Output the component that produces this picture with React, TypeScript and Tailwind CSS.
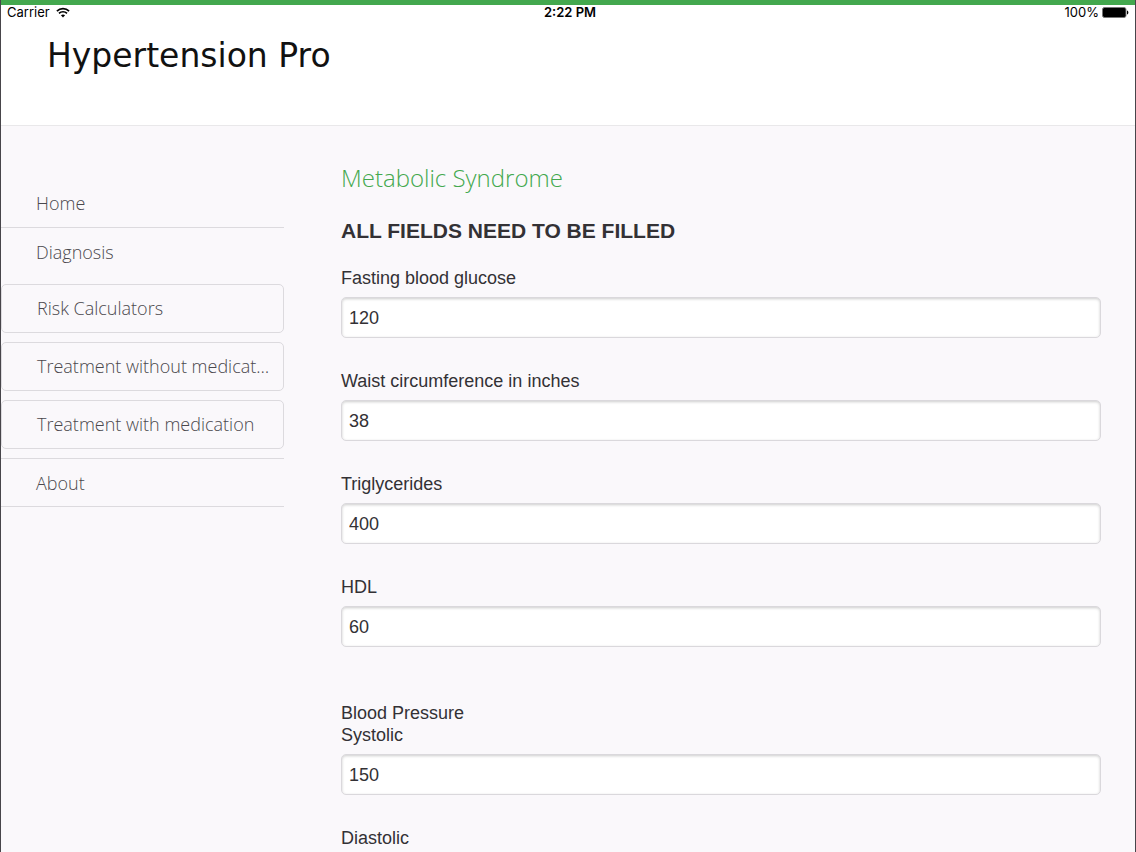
import React, { useState } from 'react';

const INITIAL_VALUES: Record<string, string> = {
  glucose: '120',
  waist: '38',
  triglycerides: '400',
  hdl: '60',
  systolic: '150',
  diastolic: '',
};

const WifiIcon: React.FC = () => (
  <svg width="14" height="11" viewBox="0 0 14 11" fill="none" stroke="#000" aria-hidden="true">
    <path d="M0.9 4.1C4.3 0.7 9.7 0.7 13.1 4.1" strokeWidth="1.7" />
    <path d="M3 6.4C5.2 4.2 8.8 4.2 11 6.4" strokeWidth="1.7" />
    <path d="M7 10.6L4.9 8.3C6.1 7.2 7.9 7.2 9.1 8.3Z" fill="#000" stroke="none" />
  </svg>
);

const BatteryIcon: React.FC = () => (
  <svg width="27" height="11" viewBox="0 0 27 11" aria-hidden="true">
    <rect x="0.5" y="0.5" width="23.5" height="10" rx="2" fill="#000" stroke="#777" />
    <path d="M25 3.5C26.8 4 26.8 7 25 7.5Z" fill="#000" />
  </svg>
);

const StatusBar: React.FC = () => (
  <div className="grid grid-cols-3 items-center pl-[6px] pr-[6px] h-[14px] font-['Inter',sans-serif] text-[13px] leading-[14px] text-black">
    <div className="flex items-center gap-[6px]">
      <span>Carrier</span>
      <WifiIcon />
    </div>
    <div className="pl-1 text-center font-semibold">2:22 PM</div>
    <div className="flex items-center justify-end gap-[3px]">
      <span>100%</span>
      <BatteryIcon />
    </div>
  </div>
);

interface NavLinkProps {
  label: string;
  className?: string;
}

const NavLink: React.FC<NavLinkProps> = ({ label, className = '' }) => (
  <a href="#" className={`block h-[49px] pl-[35px] leading-[48px] border-[#dcdade] ${className}`}>
    {label}
  </a>
);

const NavBox: React.FC<{ label: string }> = ({ label }) => (
  <button
    type="button"
    className="block w-full h-[49px] pl-[35px] pr-[12px] text-left truncate border border-[#dcdade] rounded-[5px]"
  >
    {label}
  </button>
);

const Sidebar: React.FC = () => (
  <nav className="w-[283px] shrink-0 pt-[53px] font-['Open_Sans',sans-serif] font-light text-[18px] text-[#4a484d]">
    <NavLink label="Home" className="border-b" />
    <NavLink label="Diagnosis" />
    <div className="flex flex-col gap-[9px] mt-[7px]">
      <NavBox label="Risk Calculators" />
      <NavBox label="Treatment without medication" />
      <NavBox label="Treatment with medication" />
      <NavLink label="About" className="border-y" />
    </div>
  </nav>
);

interface FieldProps {
  id: string;
  label: string;
  value: string;
  onChange: (id: string, value: string) => void;
}

const Field: React.FC<FieldProps> = ({ id, label, value, onChange }) => (
  <div className="mb-8">
    <label htmlFor={id} className="block mb-2 leading-[22px]">
      {label}
    </label>
    <input
      id={id}
      type="text"
      inputMode="numeric"
      value={value}
      onChange={(e) => onChange(id, e.target.value)}
      className="block w-full h-[41px] px-[7px] pt-[2px] bg-white border border-[#dad8dc] rounded-[5px] shadow-[inset_0_1px_3px_rgba(0,0,0,0.2)] outline-none"
    />
  </div>
);

const App: React.FC = () => {
  const [values, setValues] = useState(INITIAL_VALUES);

  const update = (id: string, value: string) => {
    setValues((prev) => ({ ...prev, [id]: value }));
  };

  return (
    <div className="h-screen flex flex-col bg-[#faf8fb] border-x border-[#47454a]">
      <header className="shrink-0 h-[126px] bg-white border-t-[5px] border-t-[#43a84e] border-b border-b-[#e9e8ea]">
        <StatusBar />
        <h1 className="pl-[46px] pt-[17px] font-['DejaVu_Sans',sans-serif] text-[33px] leading-[40px] text-[#111]">
          Hypertension Pro
        </h1>
      </header>

      <div className="flex-1 min-h-0 flex overflow-y-auto [scrollbar-width:none]">
        <Sidebar />

        <main className="flex-1 min-w-0 pl-[57px] pr-[34px] pt-[34px] font-['Liberation_Sans',sans-serif] text-[18px] text-[#333135]">
          <h2 className="font-['Open_Sans',sans-serif] font-light text-[24px] leading-[36px] text-[#43a84e]">
            Metabolic Syndrome
          </h2>
          <h3 className="mt-[21px] mb-[22px] font-bold text-[21px] leading-[28px]">ALL FIELDS NEED TO BE FILLED</h3>

          <form>
            <Field id="glucose" label="Fasting blood glucose" value={values.glucose} onChange={update} />
            <Field id="waist" label="Waist circumference in inches" value={values.waist} onChange={update} />
            <Field id="triglycerides" label="Triglycerides" value={values.triglycerides} onChange={update} />
            <Field id="hdl" label="HDL" value={values.hdl} onChange={update} />

            <fieldset>
              <legend className="pt-[23px] leading-[22px]">Blood Pressure</legend>
              <Field id="systolic" label="Systolic" value={values.systolic} onChange={update} />
              <Field id="diastolic" label="Diastolic" value={values.diastolic} onChange={update} />
            </fieldset>
          </form>
        </main>
      </div>
    </div>
  );
};

export default App;
